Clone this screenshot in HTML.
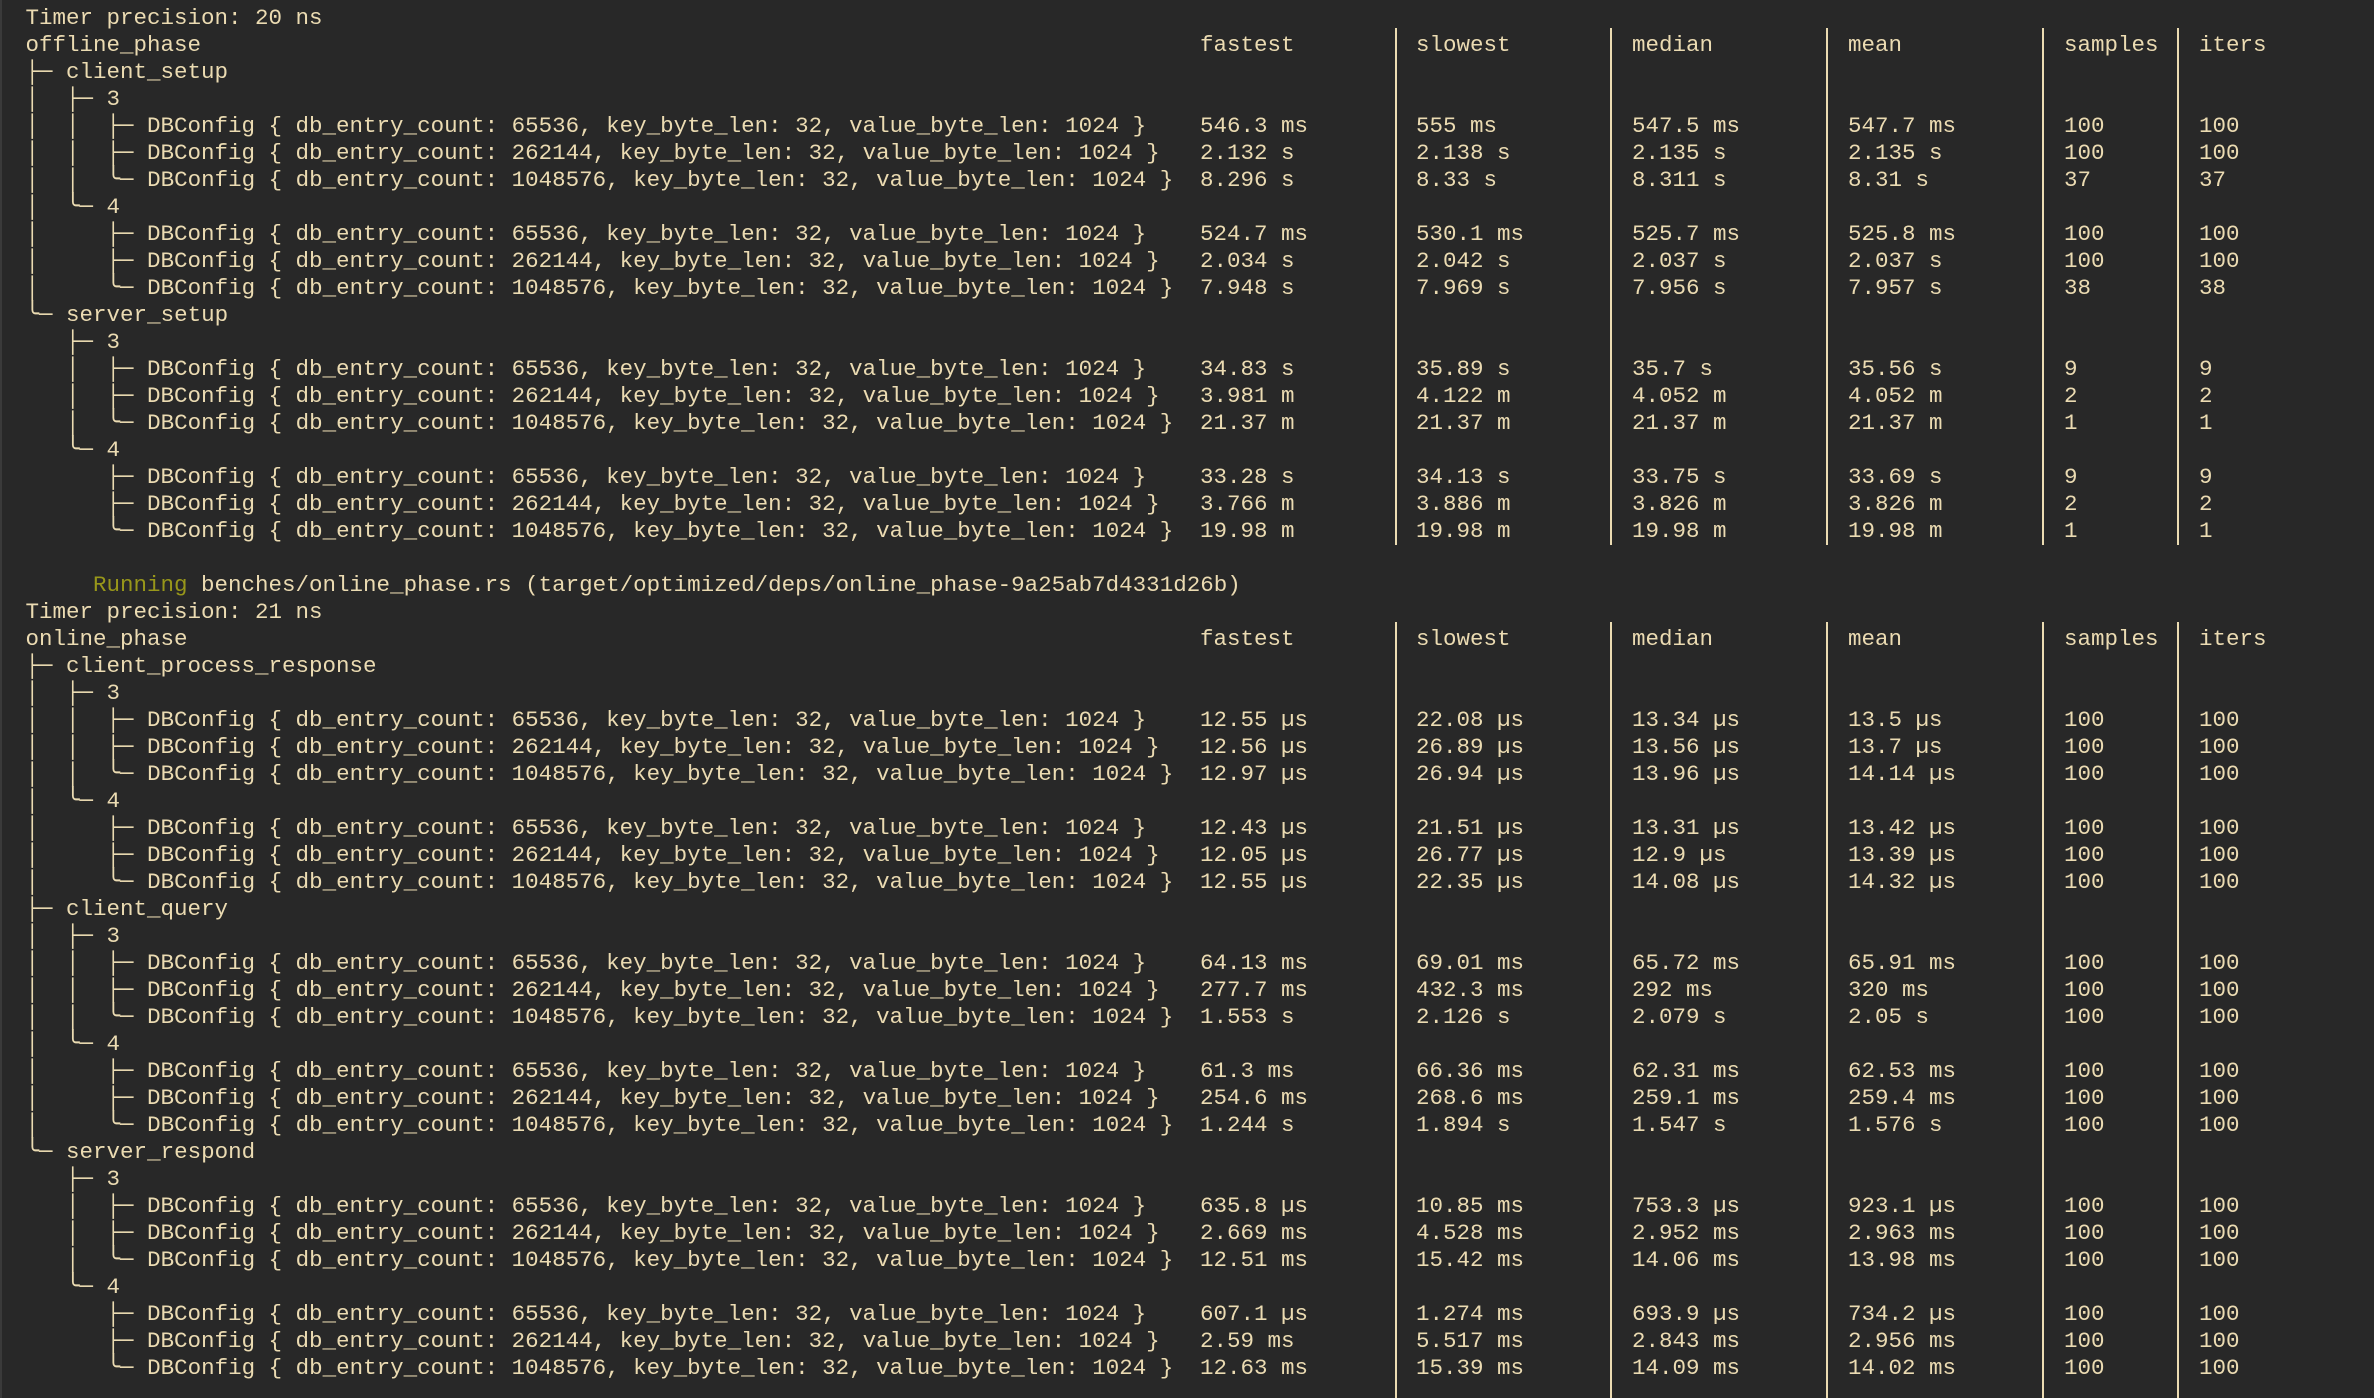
<!DOCTYPE html>
<html><head><meta charset="utf-8"><style>
html,body{margin:0;padding:0;background:#282828;}
body{width:2374px;height:1398px;overflow:hidden;position:relative;font-family:"Liberation Mono","DejaVu Sans Mono",monospace;font-size:22.5px;color:#ebdbb2;}
#w{position:absolute;left:0;top:5px;width:2374px;}
.r{position:relative;height:27px;line-height:27px;white-space:pre;}
.r span{position:absolute;top:0;}
.t{left:25.5px}.f{left:1200px}.s{left:1416px}.m{left:1632px}.n{left:1848px}.p{left:2064px}.i{left:2199px}
.v{position:absolute;width:2px;background:#ebdbb2;}
.y{color:#98971a}
.edge{position:absolute;left:0;top:0;width:2px;height:1398px;background:#3a3a3a}
</style></head><body>
<div class="edge"></div>
<div class="v" style="left:1395px;top:28px;height:517px"></div>
<div class="v" style="left:1610px;top:28px;height:517px"></div>
<div class="v" style="left:1826px;top:28px;height:517px"></div>
<div class="v" style="left:2042px;top:28px;height:517px"></div>
<div class="v" style="left:2177px;top:28px;height:517px"></div>
<div class="v" style="left:1395px;top:622px;height:776px"></div>
<div class="v" style="left:1610px;top:622px;height:776px"></div>
<div class="v" style="left:1826px;top:622px;height:776px"></div>
<div class="v" style="left:2042px;top:622px;height:776px"></div>
<div class="v" style="left:2177px;top:622px;height:776px"></div>
<div class="r" style="position:absolute;top:-25px;left:0;width:2374px"><span class="t">     <span class="y" style="position:static">Running</span> benches/offline_phase.rs (target/optimized/deps/offline_phase-3f1c9d0e7a2b4c51)</span></div>
<div id="w">
<div class="r"><span class="t">Timer precision: 20 ns</span></div>
<div class="r"><span class="t">offline_phase</span><span class="f">fastest</span><span class="s">slowest</span><span class="m">median</span><span class="n">mean</span><span class="p">samples</span><span class="i">iters</span></div>
<div class="r"><span class="t">├─ client_setup</span></div>
<div class="r"><span class="t">│  ├─ 3</span></div>
<div class="r"><span class="t">│  │  ├─ DBConfig { db_entry_count: 65536, key_byte_len: 32, value_byte_len: 1024 }</span><span class="f">546.3 ms</span><span class="s">555 ms</span><span class="m">547.5 ms</span><span class="n">547.7 ms</span><span class="p">100</span><span class="i">100</span></div>
<div class="r"><span class="t">│  │  ├─ DBConfig { db_entry_count: 262144, key_byte_len: 32, value_byte_len: 1024 }</span><span class="f">2.132 s</span><span class="s">2.138 s</span><span class="m">2.135 s</span><span class="n">2.135 s</span><span class="p">100</span><span class="i">100</span></div>
<div class="r"><span class="t">│  │  ╰─ DBConfig { db_entry_count: 1048576, key_byte_len: 32, value_byte_len: 1024 }</span><span class="f">8.296 s</span><span class="s">8.33 s</span><span class="m">8.311 s</span><span class="n">8.31 s</span><span class="p">37</span><span class="i">37</span></div>
<div class="r"><span class="t">│  ╰─ 4</span></div>
<div class="r"><span class="t">│     ├─ DBConfig { db_entry_count: 65536, key_byte_len: 32, value_byte_len: 1024 }</span><span class="f">524.7 ms</span><span class="s">530.1 ms</span><span class="m">525.7 ms</span><span class="n">525.8 ms</span><span class="p">100</span><span class="i">100</span></div>
<div class="r"><span class="t">│     ├─ DBConfig { db_entry_count: 262144, key_byte_len: 32, value_byte_len: 1024 }</span><span class="f">2.034 s</span><span class="s">2.042 s</span><span class="m">2.037 s</span><span class="n">2.037 s</span><span class="p">100</span><span class="i">100</span></div>
<div class="r"><span class="t">│     ╰─ DBConfig { db_entry_count: 1048576, key_byte_len: 32, value_byte_len: 1024 }</span><span class="f">7.948 s</span><span class="s">7.969 s</span><span class="m">7.956 s</span><span class="n">7.957 s</span><span class="p">38</span><span class="i">38</span></div>
<div class="r"><span class="t">╰─ server_setup</span></div>
<div class="r"><span class="t">   ├─ 3</span></div>
<div class="r"><span class="t">   │  ├─ DBConfig { db_entry_count: 65536, key_byte_len: 32, value_byte_len: 1024 }</span><span class="f">34.83 s</span><span class="s">35.89 s</span><span class="m">35.7 s</span><span class="n">35.56 s</span><span class="p">9</span><span class="i">9</span></div>
<div class="r"><span class="t">   │  ├─ DBConfig { db_entry_count: 262144, key_byte_len: 32, value_byte_len: 1024 }</span><span class="f">3.981 m</span><span class="s">4.122 m</span><span class="m">4.052 m</span><span class="n">4.052 m</span><span class="p">2</span><span class="i">2</span></div>
<div class="r"><span class="t">   │  ╰─ DBConfig { db_entry_count: 1048576, key_byte_len: 32, value_byte_len: 1024 }</span><span class="f">21.37 m</span><span class="s">21.37 m</span><span class="m">21.37 m</span><span class="n">21.37 m</span><span class="p">1</span><span class="i">1</span></div>
<div class="r"><span class="t">   ╰─ 4</span></div>
<div class="r"><span class="t">      ├─ DBConfig { db_entry_count: 65536, key_byte_len: 32, value_byte_len: 1024 }</span><span class="f">33.28 s</span><span class="s">34.13 s</span><span class="m">33.75 s</span><span class="n">33.69 s</span><span class="p">9</span><span class="i">9</span></div>
<div class="r"><span class="t">      ├─ DBConfig { db_entry_count: 262144, key_byte_len: 32, value_byte_len: 1024 }</span><span class="f">3.766 m</span><span class="s">3.886 m</span><span class="m">3.826 m</span><span class="n">3.826 m</span><span class="p">2</span><span class="i">2</span></div>
<div class="r"><span class="t">      ╰─ DBConfig { db_entry_count: 1048576, key_byte_len: 32, value_byte_len: 1024 }</span><span class="f">19.98 m</span><span class="s">19.98 m</span><span class="m">19.98 m</span><span class="n">19.98 m</span><span class="p">1</span><span class="i">1</span></div>
<div class="r"></div>
<div class="r"><span class="t">     <span class="y" style="position:static">Running</span> benches/online_phase.rs (target/optimized/deps/online_phase-9a25ab7d4331d26b)</span></div>
<div class="r"><span class="t">Timer precision: 21 ns</span></div>
<div class="r"><span class="t">online_phase</span><span class="f">fastest</span><span class="s">slowest</span><span class="m">median</span><span class="n">mean</span><span class="p">samples</span><span class="i">iters</span></div>
<div class="r"><span class="t">├─ client_process_response</span></div>
<div class="r"><span class="t">│  ├─ 3</span></div>
<div class="r"><span class="t">│  │  ├─ DBConfig { db_entry_count: 65536, key_byte_len: 32, value_byte_len: 1024 }</span><span class="f">12.55 µs</span><span class="s">22.08 µs</span><span class="m">13.34 µs</span><span class="n">13.5 µs</span><span class="p">100</span><span class="i">100</span></div>
<div class="r"><span class="t">│  │  ├─ DBConfig { db_entry_count: 262144, key_byte_len: 32, value_byte_len: 1024 }</span><span class="f">12.56 µs</span><span class="s">26.89 µs</span><span class="m">13.56 µs</span><span class="n">13.7 µs</span><span class="p">100</span><span class="i">100</span></div>
<div class="r"><span class="t">│  │  ╰─ DBConfig { db_entry_count: 1048576, key_byte_len: 32, value_byte_len: 1024 }</span><span class="f">12.97 µs</span><span class="s">26.94 µs</span><span class="m">13.96 µs</span><span class="n">14.14 µs</span><span class="p">100</span><span class="i">100</span></div>
<div class="r"><span class="t">│  ╰─ 4</span></div>
<div class="r"><span class="t">│     ├─ DBConfig { db_entry_count: 65536, key_byte_len: 32, value_byte_len: 1024 }</span><span class="f">12.43 µs</span><span class="s">21.51 µs</span><span class="m">13.31 µs</span><span class="n">13.42 µs</span><span class="p">100</span><span class="i">100</span></div>
<div class="r"><span class="t">│     ├─ DBConfig { db_entry_count: 262144, key_byte_len: 32, value_byte_len: 1024 }</span><span class="f">12.05 µs</span><span class="s">26.77 µs</span><span class="m">12.9 µs</span><span class="n">13.39 µs</span><span class="p">100</span><span class="i">100</span></div>
<div class="r"><span class="t">│     ╰─ DBConfig { db_entry_count: 1048576, key_byte_len: 32, value_byte_len: 1024 }</span><span class="f">12.55 µs</span><span class="s">22.35 µs</span><span class="m">14.08 µs</span><span class="n">14.32 µs</span><span class="p">100</span><span class="i">100</span></div>
<div class="r"><span class="t">├─ client_query</span></div>
<div class="r"><span class="t">│  ├─ 3</span></div>
<div class="r"><span class="t">│  │  ├─ DBConfig { db_entry_count: 65536, key_byte_len: 32, value_byte_len: 1024 }</span><span class="f">64.13 ms</span><span class="s">69.01 ms</span><span class="m">65.72 ms</span><span class="n">65.91 ms</span><span class="p">100</span><span class="i">100</span></div>
<div class="r"><span class="t">│  │  ├─ DBConfig { db_entry_count: 262144, key_byte_len: 32, value_byte_len: 1024 }</span><span class="f">277.7 ms</span><span class="s">432.3 ms</span><span class="m">292 ms</span><span class="n">320 ms</span><span class="p">100</span><span class="i">100</span></div>
<div class="r"><span class="t">│  │  ╰─ DBConfig { db_entry_count: 1048576, key_byte_len: 32, value_byte_len: 1024 }</span><span class="f">1.553 s</span><span class="s">2.126 s</span><span class="m">2.079 s</span><span class="n">2.05 s</span><span class="p">100</span><span class="i">100</span></div>
<div class="r"><span class="t">│  ╰─ 4</span></div>
<div class="r"><span class="t">│     ├─ DBConfig { db_entry_count: 65536, key_byte_len: 32, value_byte_len: 1024 }</span><span class="f">61.3 ms</span><span class="s">66.36 ms</span><span class="m">62.31 ms</span><span class="n">62.53 ms</span><span class="p">100</span><span class="i">100</span></div>
<div class="r"><span class="t">│     ├─ DBConfig { db_entry_count: 262144, key_byte_len: 32, value_byte_len: 1024 }</span><span class="f">254.6 ms</span><span class="s">268.6 ms</span><span class="m">259.1 ms</span><span class="n">259.4 ms</span><span class="p">100</span><span class="i">100</span></div>
<div class="r"><span class="t">│     ╰─ DBConfig { db_entry_count: 1048576, key_byte_len: 32, value_byte_len: 1024 }</span><span class="f">1.244 s</span><span class="s">1.894 s</span><span class="m">1.547 s</span><span class="n">1.576 s</span><span class="p">100</span><span class="i">100</span></div>
<div class="r"><span class="t">╰─ server_respond</span></div>
<div class="r"><span class="t">   ├─ 3</span></div>
<div class="r"><span class="t">   │  ├─ DBConfig { db_entry_count: 65536, key_byte_len: 32, value_byte_len: 1024 }</span><span class="f">635.8 µs</span><span class="s">10.85 ms</span><span class="m">753.3 µs</span><span class="n">923.1 µs</span><span class="p">100</span><span class="i">100</span></div>
<div class="r"><span class="t">   │  ├─ DBConfig { db_entry_count: 262144, key_byte_len: 32, value_byte_len: 1024 }</span><span class="f">2.669 ms</span><span class="s">4.528 ms</span><span class="m">2.952 ms</span><span class="n">2.963 ms</span><span class="p">100</span><span class="i">100</span></div>
<div class="r"><span class="t">   │  ╰─ DBConfig { db_entry_count: 1048576, key_byte_len: 32, value_byte_len: 1024 }</span><span class="f">12.51 ms</span><span class="s">15.42 ms</span><span class="m">14.06 ms</span><span class="n">13.98 ms</span><span class="p">100</span><span class="i">100</span></div>
<div class="r"><span class="t">   ╰─ 4</span></div>
<div class="r"><span class="t">      ├─ DBConfig { db_entry_count: 65536, key_byte_len: 32, value_byte_len: 1024 }</span><span class="f">607.1 µs</span><span class="s">1.274 ms</span><span class="m">693.9 µs</span><span class="n">734.2 µs</span><span class="p">100</span><span class="i">100</span></div>
<div class="r"><span class="t">      ├─ DBConfig { db_entry_count: 262144, key_byte_len: 32, value_byte_len: 1024 }</span><span class="f">2.59 ms</span><span class="s">5.517 ms</span><span class="m">2.843 ms</span><span class="n">2.956 ms</span><span class="p">100</span><span class="i">100</span></div>
<div class="r"><span class="t">      ╰─ DBConfig { db_entry_count: 1048576, key_byte_len: 32, value_byte_len: 1024 }</span><span class="f">12.63 ms</span><span class="s">15.39 ms</span><span class="m">14.09 ms</span><span class="n">14.02 ms</span><span class="p">100</span><span class="i">100</span></div>
</div>
</body></html>
